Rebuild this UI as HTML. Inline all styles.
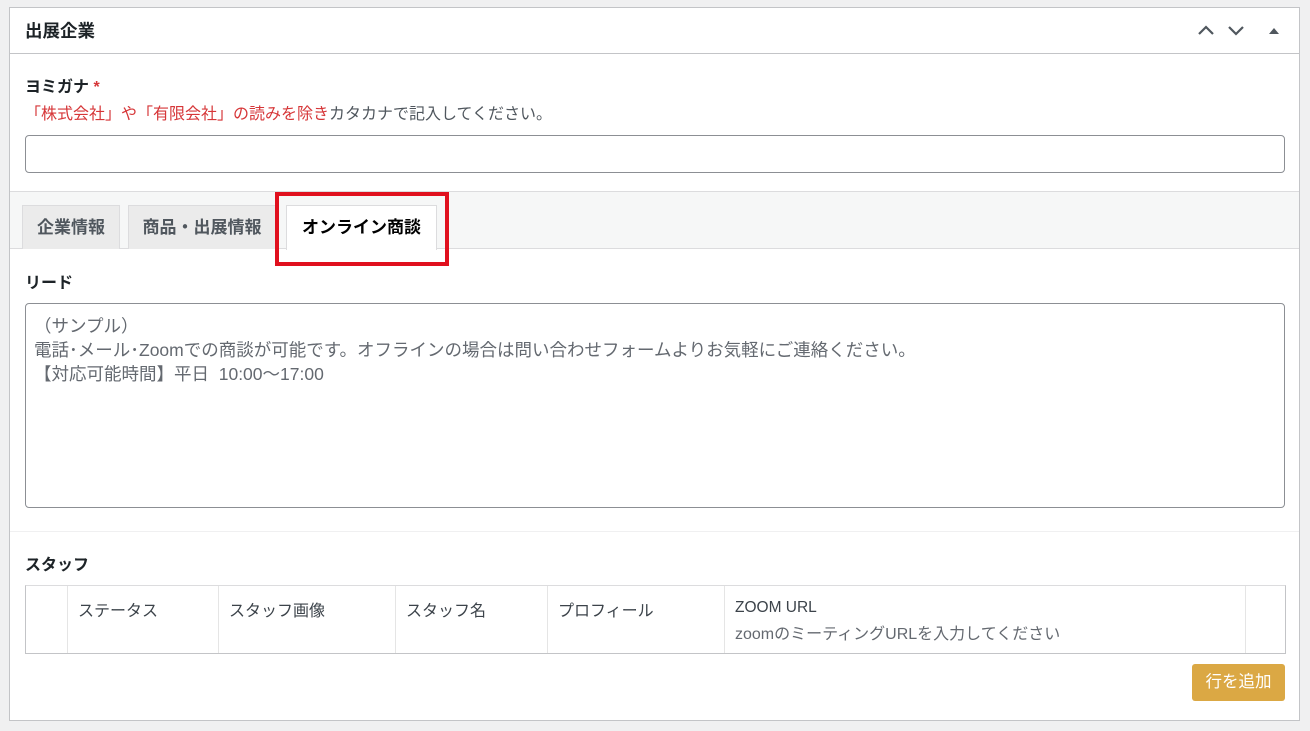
<!DOCTYPE html>
<html><head><meta charset="utf-8"><style>
*{box-sizing:border-box;margin:0;padding:0}
body{width:1310px;height:731px;background:#f0f0f1;font-family:"Liberation Sans","Noto Sans CJK JP",sans-serif;font-size:16px;color:#3c434a;position:relative;overflow:hidden}
.a{position:absolute}
.panel{left:9px;top:7px;width:1291px;height:714px;background:#fff;border:1px solid #c3c4c7}
.b{font-weight:bold;color:#1d2327}
</style></head><body>
<div class="a panel"></div>
<div class="a" style="left:10px;top:53px;width:1289px;height:1px;background:#c3c4c7"></div>
<div class="a b" style="left:25px;top:18px;font-size:17.5px">出展企業</div>
<svg class="a" style="left:1196px;top:22px" width="90" height="16">
<path d="M3 12 L10 5 L17 12" stroke="#50575e" stroke-width="2.2" fill="none"/>
<path d="M33 5 L40 12 L47 5" stroke="#50575e" stroke-width="2.2" fill="none"/>
<path d="M73 12 L78 6 L83 12 Z" fill="#50575e"/>
</svg>
<div class="a b" style="left:25px;top:73px">ヨミガナ <span style="color:#d63638">*</span></div>
<div class="a" style="left:25px;top:100px;color:#50575e"><span style="color:#d63638">「株式会社」や「有限会社」の読みを除き</span>カタカナで記入してください。</div>
<div class="a" style="left:25px;top:135px;width:1260px;height:38px;border:1px solid #8c8f94;border-radius:4px"></div>
<div class="a" style="left:10px;top:191px;width:1289px;height:58px;background:#f6f7f7;border-top:1px solid #dcdcde;border-bottom:1px solid #dcdcde"></div>
<div class="a b" style="left:22px;top:205px;width:98px;height:44px;background:#ebebeb;border:1px solid #dcdcde;border-bottom:none;color:#50575e;font-size:17px;text-align:center;line-height:44px;white-space:nowrap">企業情報</div>
<div class="a b" style="left:128px;top:205px;width:148px;height:44px;background:#ebebeb;border:1px solid #dcdcde;border-bottom:none;color:#50575e;font-size:17px;text-align:center;line-height:44px;white-space:nowrap">商品・出展情報</div>
<div class="a b" style="left:286px;top:205px;width:151px;height:45px;background:#fff;border:1px solid #dcdcde;border-bottom:none;color:#000;font-size:17px;text-align:center;line-height:44px;white-space:nowrap">オンライン商談</div>
<div class="a" style="left:275px;top:192px;width:174px;height:74px;border:4px solid #e0101e"></div>
<div class="a b" style="left:25px;top:269px">リード</div>
<div class="a" style="left:25px;top:303px;width:1260px;height:205px;border:1px solid #8c8f94;border-radius:4px;padding:10px 8px;font-size:17.5px;line-height:24px;color:#646970">（サンプル）<br>電話･メール･Zoomでの商談が可能です。オフラインの場合は問い合わせフォームよりお気軽にご連絡ください。<br>【対応可能時間】平日&nbsp; 10:00〜17:00</div>
<div class="a" style="left:10px;top:531px;width:1289px;height:1px;background:#f0f0f1"></div>
<div class="a b" style="left:25px;top:551px">スタッフ</div>
<div class="a" style="left:25px;top:585px;width:1261px;height:69px;border:1px solid #c3c4c7;border-top-color:#dcdcde"></div>
<div class="a" style="left:67px;top:586px;width:1px;height:67px;background:#e5e5e5"></div>
<div class="a" style="left:218px;top:586px;width:1px;height:67px;background:#e5e5e5"></div>
<div class="a" style="left:395px;top:586px;width:1px;height:67px;background:#e5e5e5"></div>
<div class="a" style="left:547px;top:586px;width:1px;height:67px;background:#e5e5e5"></div>
<div class="a" style="left:724px;top:586px;width:1px;height:67px;background:#e5e5e5"></div>
<div class="a" style="left:1245px;top:586px;width:1px;height:67px;background:#e5e5e5"></div>
<div class="a" style="left:78px;top:597px">ステータス</div>
<div class="a" style="left:229px;top:597px">スタッフ画像</div>
<div class="a" style="left:406px;top:597px">スタッフ名</div>
<div class="a" style="left:558px;top:597px">プロフィール</div>
<div class="a" style="left:735px;top:599px;font-size:15.5px">ZOOM URL</div>
<div class="a" style="left:735px;top:620px;color:#646970">zoomのミーティングURLを入力してください</div>
<div class="a" style="left:1192px;top:664px;width:93px;height:37px;background:#dba844;border-radius:3px;color:#fff;font-size:16.5px;text-align:center;line-height:37px">行を追加</div>
</body></html>
